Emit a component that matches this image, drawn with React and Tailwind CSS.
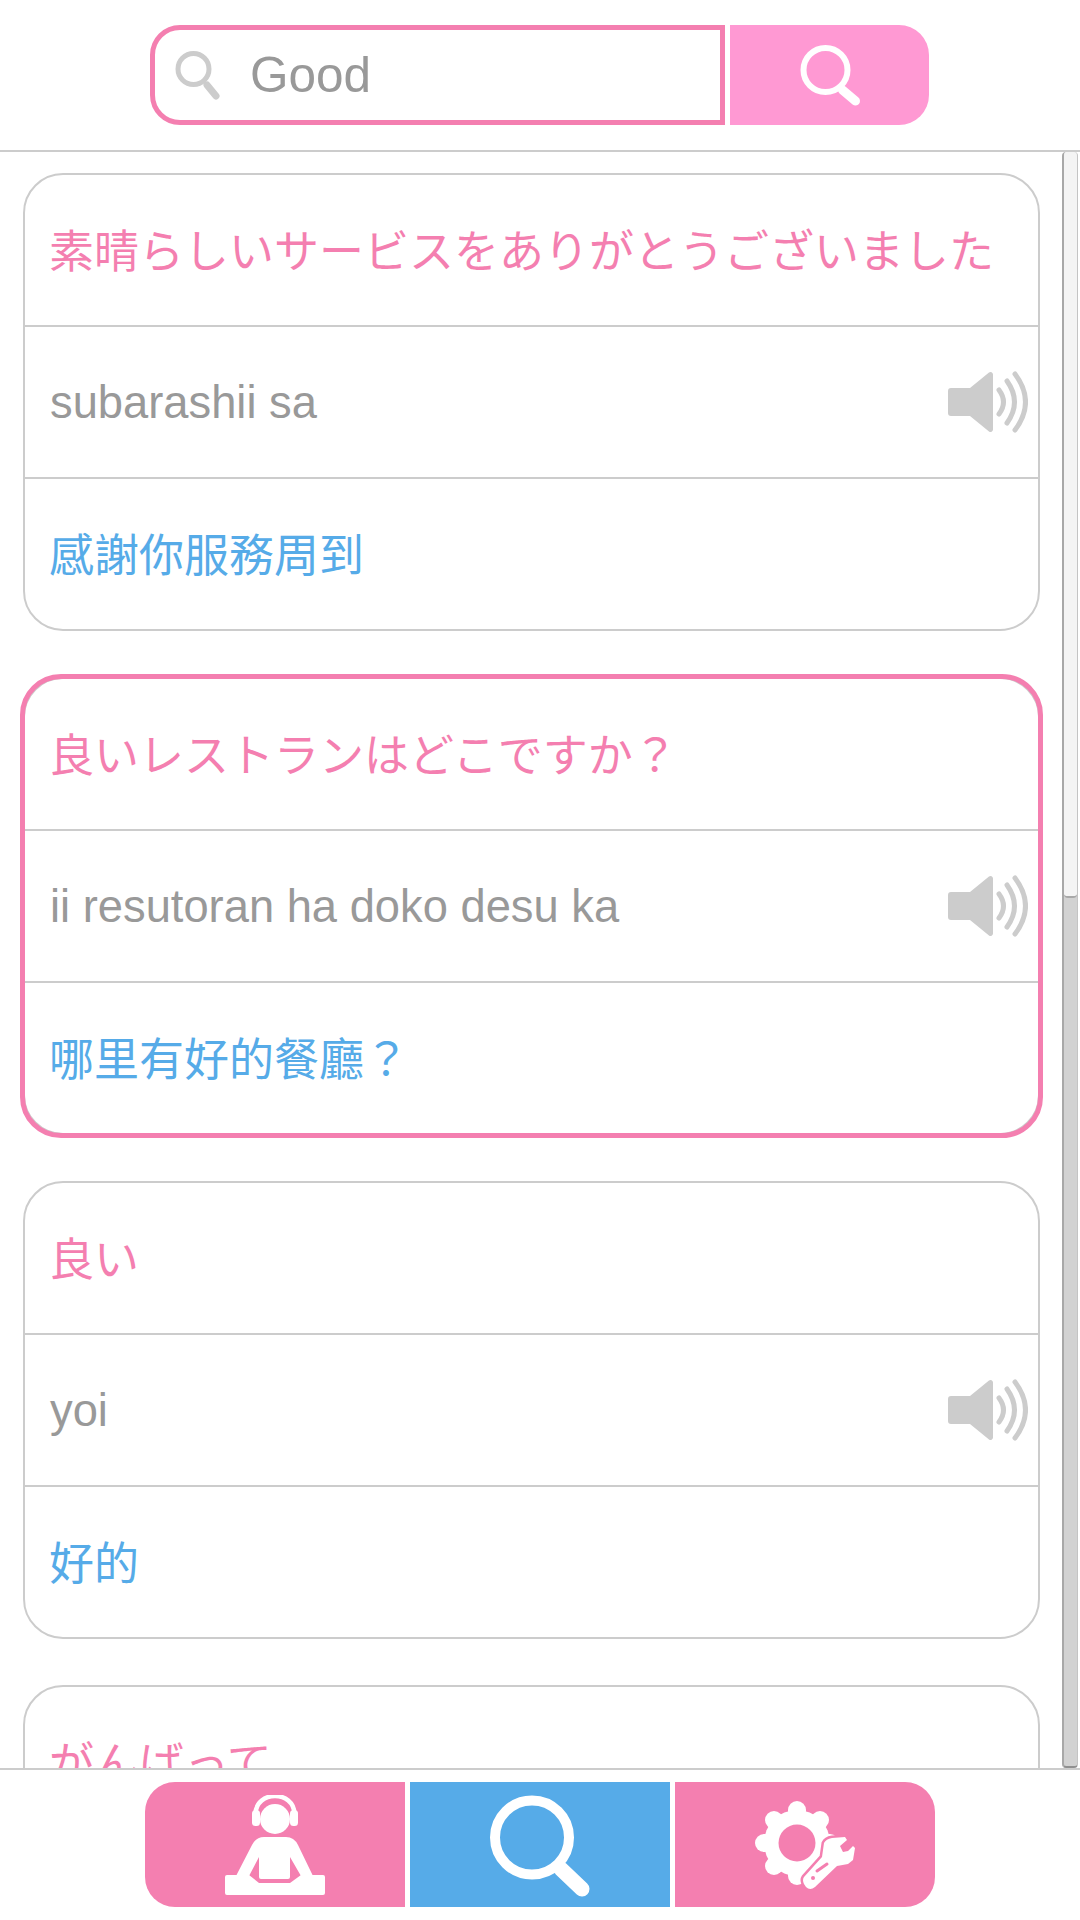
import React from 'react';

const JP = "font-['Liberation_Sans','Noto_Sans_CJK_JP',sans-serif]";
const TC = "font-['Liberation_Sans','Noto_Sans_CJK_TC',sans-serif]";

const entries = [
  { jp: '素晴らしいサービスをありがとうございました', romaji: 'subarashii sa', zh: '感謝你服務周到' },
  { jp: '良いレストランはどこですか？', romaji: 'ii resutoran ha doko desu ka', zh: '哪里有好的餐廳？', active: true },
  { jp: '良い', romaji: 'yoi', zh: '好的' },
  { jp: 'がんばって', romaji: '', zh: '' },
];

const SpeakerIcon = () => (
  <svg width="80" height="62" viewBox="0 0 80 62" className="shrink-0">
    <path d="M3 17h19L41 1.500a2.500 2.500 0 0 1 4 2V58.500a2.500 2.500 0 0 1-4 2L22 45H3a3 3 0 0 1-3-3V20a3 3 0 0 1 3-3z" fill="#cccccc" />
    <g fill="none" stroke="#cccccc" strokeWidth="5" strokeLinecap="round">
      <path d="M51 19q9 12 0 24" />
      <path d="M59 10q15 21 0 42" />
      <path d="M67 3q21 28 0 56" />
    </g>
  </svg>
);

const Card = ({ entry }) => (
  <div className="relative mb-[46px] shrink-0 rounded-[40px] border-2 border-[#cccccc] bg-white">
    {entry.active && (
      <div className="absolute inset-[-5px] z-10 rounded-[41px] border-[5px] border-[#f47fb0]" />
    )}
    <div className={`flex h-[150px] items-center pl-[24px] pr-[25px] pt-[5px] text-[45px] text-[#f47fb0] ${JP}`}>
      {entry.jp}
    </div>
    <div className="flex h-[154px] items-center justify-between border-y-2 border-[#cccccc] pl-[25px] pr-[10px]">
      <span className="pt-[2px] font-['Liberation_Sans',sans-serif] text-[45.3px] text-[#999999]">{entry.romaji}</span>
      <SpeakerIcon />
    </div>
    <div className={`flex h-[150px] items-center pl-[24px] pr-[25px] pt-[5px] text-[45px] text-[#56abe8] ${TC}`}>
      {entry.zh}
    </div>
  </div>
);

export default function App() {
  return (
    <div className="flex h-[1920px] w-[1080px] flex-col overflow-hidden bg-white">
      {/* search bar */}
      <div className="flex h-[152px] shrink-0 items-start gap-[5px] border-b-2 border-[#cccccc] pl-[150px] pt-[25px]">
        <div className="flex h-[100px] w-[575px] items-center rounded-l-[30px] border-[5px] border-[#f47fb0] pl-[20px]">
          <svg width="50" height="56" viewBox="0 0 50 56" className="shrink-0">
            <circle cx="18.500" cy="22" r="15.500" fill="none" stroke="#cccccc" strokeWidth="5" />
            <path d="M32 38l9 11" stroke="#cccccc" strokeWidth="7" strokeLinecap="round" />
          </svg>
          <span className="ml-[25px] font-['Liberation_Sans',sans-serif] text-[49.5px] text-[#999999]">Good</span>
        </div>
        <button className="flex h-[100px] w-[199px] items-center justify-center rounded-r-[30px] bg-[#ff99d3]">
          <svg width="80" height="80" viewBox="0 0 80 80">
            <circle cx="35.500" cy="35" r="22" fill="none" stroke="#ffffff" strokeWidth="6" />
            <path d="M52.500 55L65.500 66" stroke="#ffffff" strokeWidth="9" strokeLinecap="round" />
          </svg>
        </button>
      </div>

      {/* result list with scrollbar */}
      <div className="flex min-h-0 flex-1">
        <div className="flex min-w-0 flex-1 flex-col overflow-hidden pl-[23px] pr-[22px] pt-[21px]">
          {entries.map((entry) => (
            <Card key={entry.jp} entry={entry} />
          ))}
        </div>
        <div className="mr-[2px] flex w-[16px] shrink-0 flex-col overflow-hidden rounded-[4px] border-b-2 border-l-2 border-r border-b-[#909090] border-l-[#a8a8a8] border-r-[#c4c4c4] bg-[#d2d2d2]">
          <div className="h-[746px] rounded-b-[4px] border-b-2 border-[#a8a8a8] bg-[#f4f4f4]" />
        </div>
      </div>

      {/* bottom nav */}
      <div className="flex h-[152px] shrink-0 items-start justify-center gap-[5px] border-t-2 border-[#cccccc] pt-[12px]">
        <button className="flex h-[125px] w-[260px] items-center justify-center rounded-l-[30px] bg-[#f47fb0]">
          <svg width="100" height="100" viewBox="25 25 100 100" fill="#ffffff">
            <circle cx="75" cy="49" r="15" />
            <path d="M55.500 44C56 20 94 20 94.500 44" fill="none" stroke="#ffffff" strokeWidth="4.500" />
            <rect x="52" y="40" width="8" height="16" rx="3.500" />
            <rect x="90" y="40" width="8" height="16" rx="3.500" />
            <path d="M36 106L52 75Q56 67 64 67H86Q94 67 98 75L113 106H101L90 87V107a2 2 0 0 1-2 2H61a2 2 0 0 1-2-2V87L49 106Z" />
            <path d="M27 105H49L59 113H90L101 105H123a2 2 0 0 1 2 2V123a2 2 0 0 1-2 2H27a2 2 0 0 1-2-2V107a2 2 0 0 1 2-2Z" />
          </svg>
        </button>
        <button className="flex h-[125px] w-[260px] items-center justify-center bg-[#56abe8]">
          <svg width="120" height="120" viewBox="0 0 120 120">
            <circle cx="52" cy="52.500" r="37" fill="none" stroke="#ffffff" strokeWidth="10" />
            <path d="M81 84L102 104" stroke="#ffffff" strokeWidth="15" strokeLinecap="round" />
          </svg>
        </button>
        <button className="flex h-[125px] w-[260px] items-center justify-center rounded-r-[30px] bg-[#f47fb0]">
          <svg width="120" height="110" viewBox="45 30 120 110">
            <g stroke="#ffffff" strokeWidth="18" strokeLinecap="round">
              <path d="M97 50V51" />
              <path d="M97 115V116" />
              <path d="M64 83H65" />
              <path d="M129 83H130" />
              <path d="M74 60L75 61" />
              <path d="M119 105L120 106" />
              <path d="M74 106L75 105" />
              <path d="M119 61L120 60" />
            </g>
            <circle cx="97" cy="83" r="33" fill="#ffffff" />
            <circle cx="97" cy="83" r="18.500" fill="#f47fb0" />
            <path
              d="M104 117L122 97L124 83Q126 79 132 78L145 77L147 80L140 86L143 92L148 91L153 86L155 88L153 100L148 104L137 106L115 127Q110 131 106 127L104 124Q102 120 104 117Z"
              fill="#ffffff"
              stroke="#f47fb0"
              strokeWidth="5"
              paintOrder="stroke"
            />
            <path d="M117 111L127 104" stroke="#f47fb0" strokeWidth="3" strokeLinecap="round" />
            <circle cx="113" cy="118" r="2" fill="#f47fb0" />
          </svg>
        </button>
      </div>
    </div>
  );
}
